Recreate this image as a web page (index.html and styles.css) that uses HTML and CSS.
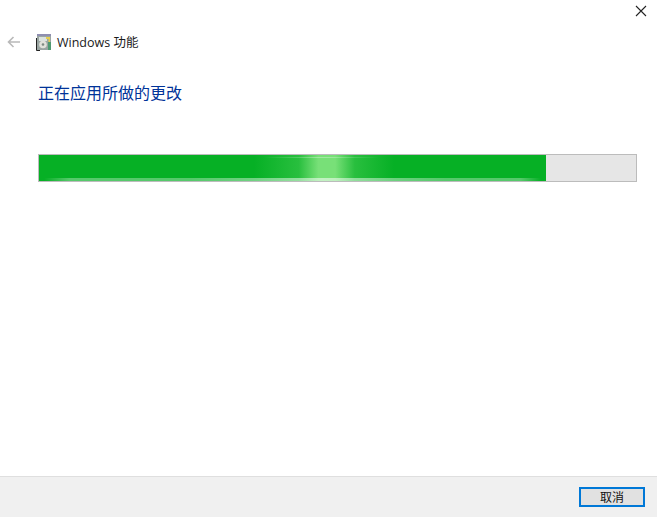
FILE: index.html
```html
<!DOCTYPE HTML>
<html lang=zh>
  <head>
    <title>Windows 功能</title>
    <meta name=viewport content=width=device-width,initial-scale=1>
    <link rel="stylesheet" href="styles.css">
  </head>
  <body>
    <div class=window>
      <div class=titlebar>
        <svg class=close width=12 height=12 viewBox="0 0 12 12">
          <path d="M1 1L11 11M11 1L1 11" stroke="#222" stroke-width="1.1" fill="none"/>
        </svg>
      </div>
      <div class=header>
        <svg class=back width=14 height=12 viewBox="0 0 14 12">
          <path d="M13 6H2M6.5 1L1.5 6L6.5 11" stroke="#b9b9b9" stroke-width="1.6" fill="none"/>
        </svg>
        <svg class=appicon width=16 height=17 viewBox="0 0 16 17">
          <rect x="1" y="1" width="14" height="15" fill="#9aa5a2"/>
          <rect x="1" y="0" width="14" height="2" fill="#8f8fb0"/>
          <rect x="3" y="3" width="8" height="4" fill="#dbe3df"/>
          <path d="M10 3H14V8H12.5V5H10Z" fill="#e6cf4e"/>
          <circle cx="7" cy="10.5" r="3.8" fill="#e2e2da"/>
          <circle cx="7" cy="10.5" r="1.3" fill="#7d8a82"/>
          <rect x="12" y="8" width="3" height="8" fill="#4f9a72"/>
          <path d="M0.5 4V16.5H4" stroke="#222" fill="none"/>
        </svg>
        <span class=apptitle>Windows 功能</span>
      </div>
      <div class=content>
        <h1>正在应用所做的更改</h1>
        <div class=progress>
          <div class=progressfill>
            <div class=shine></div>
            <div class=glowtop></div>
            <div class=glowbottom></div>
          </div>
        </div>
      </div>
      <div class=footer>
        <button class=cancel>取消</button>
      </div>
    </div>
  </body>
</html>
```
FILE: styles.css
```css
html, body {
  margin: 0;
  width: 100%;
  height: 100%;
  background: #fff;
}
.window {
  display: flex;
  flex-direction: column;
  height: 517px;
  font-family: "Noto Sans CJK SC", "Liberation Sans", sans-serif;
}
.titlebar {
  display: flex;
  justify-content: flex-end;
  height: 24px;
  padding: 5px 10px 0 0;
  box-sizing: border-box;
}
.close {
  display: block;
}
.header {
  display: flex;
  align-items: center;
  height: 36px;
  padding-left: 7px;
}
.back {
  margin-right: 15px;
}
.appicon {
  margin-right: 5px;
}
.apptitle {
  padding-bottom: 2px;
  font-family: "Open Sans", "Noto Sans CJK SC", sans-serif;
  font-size: 12.5px;
  color: #1a1a1a;
}
.content {
  flex: 1;
  padding: 20px 20px 0 38px;
}
h1 {
  margin: 0;
  font-size: 16px;
  line-height: 24px;
  font-weight: 400;
  color: #003399;
}
.progress {
  height: 28px;
  margin-top: 50px;
  background: #e6e6e6;
  border: 1px solid #bcbcbc;
  box-sizing: border-box;
}
.progressfill {
  position: relative;
  width: 507px;
  height: 26px;
  background: #06b025;
  overflow: hidden;
}
.shine {
  position: absolute;
  left: 215px;
  top: 0;
  width: 140px;
  height: 100%;
  background: linear-gradient(90deg, rgba(120,225,120,0), rgba(120,225,120,.3) 32%, #78e078 46%, #78e078 58%, rgba(120,225,120,.3) 72%, rgba(120,225,120,0));
}
.glowtop {
  position: absolute;
  left: 225px;
  top: 2px;
  width: 115px;
  height: 1px;
  background: linear-gradient(90deg, rgba(255,255,255,0), rgba(255,255,255,.3) 45%, rgba(255,255,255,.3) 55%, rgba(255,255,255,0));
}
.glowbottom {
  position: absolute;
  left: 0;
  right: 0;
  bottom: 0;
  height: 3px;
  background: linear-gradient(90deg, rgba(255,255,255,0) 1%, rgba(255,255,255,.32) 6%, rgba(255,255,255,.32) 30%, rgba(255,255,255,.55) 56%, rgba(255,255,255,.32) 80%, rgba(255,255,255,.32) 95%, rgba(255,255,255,0) 99%);
}
.footer {
  display: flex;
  justify-content: flex-end;
  align-items: flex-start;
  height: 41px;
  padding: 10px 12px 0 0;
  box-sizing: border-box;
  background: #f0f0f0;
  border-top: 1px solid #dfdfdf;
}
.cancel {
  width: 66px;
  height: 20px;
  padding: 0;
  background: #e1e1e1;
  border: 2px solid #0078d7;
  font-family: "Noto Sans CJK SC", sans-serif;
  font-size: 12px;
  line-height: 14px;
  color: #111;
}
```
